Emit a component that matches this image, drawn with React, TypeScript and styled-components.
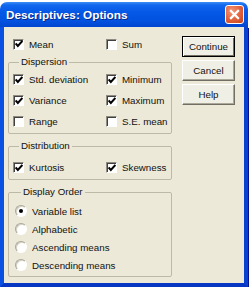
import styled, { createGlobalStyle } from "styled-components";

const Global = createGlobalStyle`
  html, body { margin: 0; background: #fff; }
  body { font-family: "Liberation Sans", Arial, sans-serif; }
`;

const Window = styled.div`
  width: 248px;
  height: 285px;
  margin-top: 2px;
  display: flex;
  flex-direction: column;
`;

const TitleBar = styled.div`
  flex: none;
  height: 25px;
  box-sizing: border-box;
  padding: 0 4px 0 6px;
  border-radius: 7px 7px 0 0;
  display: flex;
  align-items: center;
  justify-content: space-between;
  background: linear-gradient(
    180deg,
    #3d8ff4 0%,
    #1268ee 12%,
    #0558e6 40%,
    #0352e0 75%,
    #0246d0 100%
  );
`;

const Title = styled.span`
  color: #fff;
  font-weight: bold;
  font-size: 11.75px;
  text-shadow: 1px 1px 0 #0a2a8c;
`;

const CloseBtn = styled.div`
  width: 19px;
  height: 19px;
  box-sizing: border-box;
  border: 1px solid #fff;
  border-radius: 3px;
  display: grid;
  place-items: center;
  background: radial-gradient(circle at 35% 30%, #f39677 0%, #e0603a 55%, #c8421a 100%);
`;

const Body = styled.div`
  flex: 1;
  background: #ece9d8;
  border: 4px solid #0a50e2;
  border-top: 0;
  border-bottom-color: #0636c2;
  border-right-color: #0842cf;
  box-shadow: 1px 1px 0 #00138c;
  display: flex;
  gap: 10px;
  padding: 9px 0 0 4px;
`;

const LeftCol = styled.div`
  width: 164px;
  display: flex;
  flex-direction: column;
`;

const TopRow = styled.div`
  display: grid;
  grid-template-columns: 93px 1fr;
  height: 16px;
  align-items: center;
  padding-left: 5px;
`;

const Group = styled.fieldset<{ $mt: number; $pt: number; $pb: number; $pl: number }>`
  margin: ${(p) => p.$mt}px 0 0;
  padding: ${(p) => p.$pt}px 4px ${(p) => p.$pb}px ${(p) => p.$pl}px;
  border: 1px solid #bcb9a7;
  border-radius: 2px;
  min-width: 0;
`;

const Legend = styled.legend`
  margin-left: 6px;
  padding: 0 2px;
  font-size: 9.75px;
  line-height: 12px;
  color: #111;
`;

const Grid = styled.div<{ $row: number; $cols: string }>`
  display: grid;
  grid-template-columns: ${(p) => p.$cols};
  grid-auto-rows: ${(p) => p.$row}px;
  align-items: center;
`;

const Item = styled.label`
  display: flex;
  align-items: center;
  gap: 5px;
  font-size: 9.75px;
  color: #111;
  white-space: nowrap;
`;

const Box = styled.span`
  width: 11px;
  height: 11px;
  box-sizing: border-box;
  flex: none;
  background: #fff;
  border: 1px solid;
  border-color: #8e8c80 #fff #fff #8e8c80;
  box-shadow: inset 1px 1px 0 #404040;
  display: grid;
  place-items: center;
`;

const Radio = styled.span<{ $on?: boolean }>`
  width: 12px;
  height: 12px;
  box-sizing: border-box;
  flex: none;
  border-radius: 50%;
  background: #fff;
  border: 1px solid;
  border-color: #a8a698 #fff #fff #a8a698;
  box-shadow: inset 1px 1px 0 #d6d3c5;
  display: grid;
  place-items: center;

  &::after {
    content: "";
    width: 4px;
    height: 4px;
    border-radius: 50%;
    background: ${(p) => (p.$on ? "#000" : "transparent")};
  }
`;

const Buttons = styled.div`
  display: flex;
  flex-direction: column;
  gap: 3px;
`;

const Button = styled.button<{ $default?: boolean }>`
  width: 53px;
  height: 21px;
  box-sizing: border-box;
  padding: 0;
  font-family: "Liberation Sans", Arial, sans-serif;
  font-size: 9.75px;
  color: #111;
  background: #f0efe6;
  border: 1px solid;
  border-color: ${(p) => (p.$default ? "#000" : "#fff #716f64 #716f64 #fff")};
  box-shadow: ${(p) =>
    p.$default
      ? "inset 1px 1px 0 #fff, inset -1px -1px 0 #716f64"
      : "inset -1px -1px 0 #aca899"};
`;

function Check({ on }: { on?: boolean }) {
  return (
    <Box>
      {on && (
        <svg width="8" height="8" viewBox="0 0 7 7">
          <path d="M0.5 3 L2.5 5.2 L6.5 0.8" fill="none" stroke="#000" strokeWidth="1.8" />
        </svg>
      )}
    </Box>
  );
}

const CB = ({ label, on }: { label: string; on?: boolean }) => (
  <Item>
    <Check on={on} />
    {label}
  </Item>
);

const RB = ({ label, on }: { label: string; on?: boolean }) => (
  <Item>
    <Radio $on={on} />
    {label}
  </Item>
);

export default function App() {
  return (
    <>
      <Global />
      <Window>
        <TitleBar>
          <Title>Descriptives: Options</Title>
          <CloseBtn>
            <svg width="11" height="11" viewBox="0 0 11 11">
              <path d="M2 2 L9 9 M9 2 L2 9" stroke="#fff" strokeWidth="2.3" strokeLinecap="square" />
            </svg>
          </CloseBtn>
        </TitleBar>
        <Body>
          <LeftCol>
            <TopRow>
              <CB label="Mean" on />
              <CB label="Sum" />
            </TopRow>
            <Group $mt={4} $pt={1} $pb={1} $pl={4}>
              <Legend>Dispersion</Legend>
              <Grid $row={21} $cols="93px 1fr">
                <CB label="Std. deviation" on />
                <CB label="Minimum" on />
                <CB label="Variance" on />
                <CB label="Maximum" on />
                <CB label="Range" />
                <CB label="S.E. mean" />
              </Grid>
            </Group>
            <Group $mt={6} $pt={5} $pb={1} $pl={4}>
              <Legend>Distribution</Legend>
              <Grid $row={21} $cols="93px 1fr">
                <CB label="Kurtosis" on />
                <CB label="Skewness" on />
              </Grid>
            </Group>
            <Group $mt={6} $pt={4} $pb={2} $pl={6}>
              <Legend>Display Order</Legend>
              <Grid $row={18} $cols="1fr">
                <RB label="Variable list" on />
                <RB label="Alphabetic" />
                <RB label="Ascending means" />
                <RB label="Descending means" />
              </Grid>
            </Group>
          </LeftCol>
          <Buttons>
            <Button $default>Continue</Button>
            <Button>Cancel</Button>
            <Button>Help</Button>
          </Buttons>
        </Body>
      </Window>
    </>
  );
}
